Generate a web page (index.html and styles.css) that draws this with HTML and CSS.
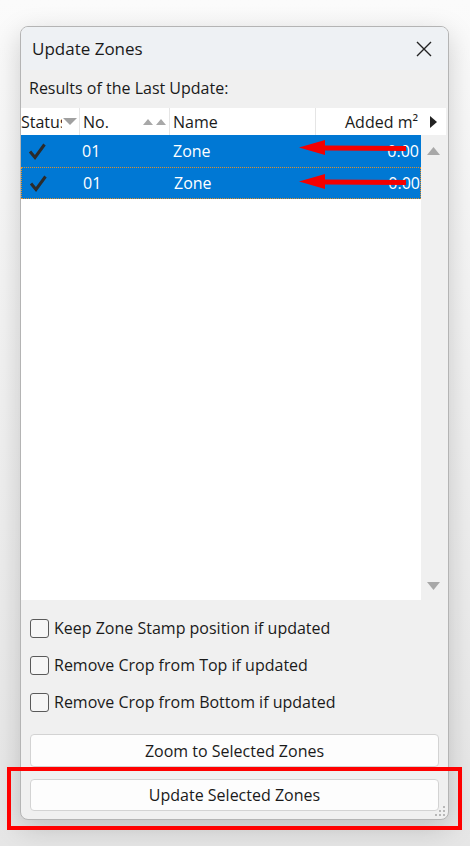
FILE: index.html
```html
<!DOCTYPE html>
<html lang="en">
<head>
    <meta charset="UTF-8">
    <meta name="viewport" content="width=device-width, initial-scale=1.0">
    <title>Update Zones</title>
    <link rel="stylesheet" href="styles.css">
</head>
<body>
    <div class="dialog">
        <div class="titlebar">
            <span class="title">Update Zones</span>
            <svg class="close" width="16" height="16" viewBox="0 0 16 16">
                <path d="M1 1 L15 15 M15 1 L1 15" stroke="#222" stroke-width="1.4" fill="none"/>
            </svg>
        </div>

        <div class="content">
            <p class="label">Results of the Last Update:</p>

            <div class="table">
                <div class="header">
                    <div class="hcell status">
                        <span>Status</span>
                        <svg class="sort" width="14" height="8" viewBox="0 0 14 8"><path d="M0 0 H14 L7 7 Z" fill="#a0a0a0"/></svg>
                    </div>
                    <div class="hcell no">
                        <span>No.</span>
                        <svg class="sort2" width="23" height="7" viewBox="0 0 23 7"><path d="M0 7 L5 1 L10 7 Z M13 7 L18 1 L23 7 Z" fill="#a8a8a8"/></svg>
                    </div>
                    <div class="hcell name">Name</div>
                    <div class="hcell added">Added m²</div>
                    <div class="hcell more">
                        <svg width="7" height="12" viewBox="0 0 7 12"><path d="M0 0 L7 6 L0 12 Z" fill="#222"/></svg>
                    </div>
                </div>

                <div class="body">
                    <div class="rows">
                        <div class="row">
                            <div class="cell status"><svg width="18" height="17" viewBox="0 0 18 17"><path d="M2 8.5 L7 14.5 L16.5 1.5" stroke="#2b2b2b" stroke-width="3" fill="none"/></svg></div>
                            <div class="cell no">01</div>
                            <div class="cell name">Zone</div>
                            <div class="cell added">0.00</div>
                        </div>
                        <div class="row focused">
                            <div class="cell status"><svg width="18" height="17" viewBox="0 0 18 17"><path d="M2 8.5 L7 14.5 L16.5 1.5" stroke="#2b2b2b" stroke-width="3" fill="none"/></svg></div>
                            <div class="cell no">01</div>
                            <div class="cell name">Zone</div>
                            <div class="cell added">0.00</div>
                        </div>
                    </div>
                    <div class="scrollbar">
                        <svg width="13" height="8" viewBox="0 0 13 8"><path d="M0 8 L6.5 0 L13 8 Z" fill="#a8a8a8"/></svg>
                        <svg width="13" height="8" viewBox="0 0 13 8"><path d="M0 0 H13 L6.5 8 Z" fill="#a8a8a8"/></svg>
                    </div>
                </div>

                <svg class="arrow arrow1" width="110" height="18" viewBox="0 0 110 18"><path d="M107 6 L26 5.5 L26 0 L0 7.5 L26 15 L26 10.5 L107 11 Z" fill="#f40000"/></svg>
                <svg class="arrow arrow2" width="110" height="18" viewBox="0 0 110 18"><path d="M107 6 L26 5.5 L26 0 L0 7.5 L26 15 L26 10.5 L107 11 Z" fill="#f40000"/></svg>
            </div>

            <div class="options">
                <label class="option"><span class="box"></span>Keep Zone Stamp position if updated</label>
                <label class="option"><span class="box"></span>Remove Crop from Top if updated</label>
                <label class="option"><span class="box"></span>Remove Crop from Bottom if updated</label>
            </div>

            <div class="buttons">
                <button class="btn zoom">Zoom to Selected Zones</button>
                <button class="btn update">Update Selected Zones</button>
            </div>
        </div>

        <svg class="grip" width="12" height="12" viewBox="0 0 12 12">
            <rect x="9" y="1" width="2" height="2" fill="#b8b8b8"/>
            <rect x="5" y="5" width="2" height="2" fill="#b8b8b8"/>
            <rect x="9" y="5" width="2" height="2" fill="#b8b8b8"/>
            <rect x="1" y="9" width="2" height="2" fill="#b8b8b8"/>
            <rect x="5" y="9" width="2" height="2" fill="#b8b8b8"/>
            <rect x="9" y="9" width="2" height="2" fill="#b8b8b8"/>
        </svg>
    </div>

    <div class="highlight"></div>
</body>
</html>
```

FILE: styles.css
```css
body {
    font-family: "Open Sans", "Noto Sans", Arial, sans-serif;
    margin: 0;
    padding: 0;
    background: linear-gradient(#fbfbfb, #e6e6e6);
    height: 846px;
    position: relative;
    overflow: hidden;
    color: #1a1a1a;
}

.dialog {
    position: relative;
    margin: 26px 0 0 20px;
    width: 427px;
    height: 792px;
    border: 1px solid #b4b4b4;
    border-radius: 8px;
    background-color: #f0f0f0;
    box-shadow: 0 8px 28px rgba(0, 0, 0, 0.18);
    display: flex;
    flex-direction: column;
    overflow: hidden;
}

.titlebar {
    height: 43px;
    background-color: #eef1f4;
    display: flex;
    align-items: center;
    justify-content: space-between;
    padding: 0 16px 0 11px;
    flex-shrink: 0;
}

.title {
    font-size: 17px;
    color: #1a1a1a;
}

.content {
    flex: 1;
    display: flex;
    flex-direction: column;
}

.label {
    margin: 0;
    padding: 7px 0 0 8px;
    height: 38px;
    font-size: 16px;
    box-sizing: border-box;
}

.table {
    position: relative;
    width: 425px;
    display: flex;
    flex-direction: column;
}

.header {
    height: 27px;
    background-color: #fff;
    display: grid;
    grid-template-columns: 59px 90px 146px 105px 25px;
    font-size: 16px;
}

.hcell {
    display: flex;
    align-items: center;
    border-right: 1px solid #e5e5e5;
    overflow: hidden;
    white-space: nowrap;
}

.hcell.status span {
    flex-shrink: 0;
}

.hcell.status .sort {
    margin-left: -6px;
    padding: 4px 2px 4px 1px;
    background-color: #fff;
    flex-shrink: 0;
}

.hcell.no {
    padding-left: 3px;
    justify-content: space-between;
}

.hcell.no .sort2 {
    margin-right: 3px;
}

.hcell.name {
    padding-left: 3px;
}

.hcell.added {
    justify-content: flex-end;
    padding-right: 3px;
    border-right: none;
}

.hcell.more {
    justify-content: center;
    border-right: none;
}

.body {
    height: 465px;
    display: flex;
}

.rows {
    width: 400px;
    background-color: #fff;
}

.row {
    height: 32px;
    background-color: #0078d4;
    color: #fff;
    display: grid;
    grid-template-columns: 59px 90px 146px 105px;
    font-size: 16px;
    box-sizing: border-box;
}

.row.focused {
    border: 1px dotted #e0902a;
}

.cell {
    display: flex;
    align-items: center;
    white-space: nowrap;
}

.cell.status {
    padding-left: 7px;
}

.cell.no {
    padding-left: 2px;
}

.cell.name {
    padding-left: 3px;
}

.cell.added {
    justify-content: flex-end;
    overflow: hidden;
    width: 103px;
}

.scrollbar {
    width: 25px;
    background-color: #f0f0f0;
    display: flex;
    flex-direction: column;
    justify-content: space-between;
    align-items: center;
    padding: 12px 0 10px;
    box-sizing: border-box;
}

.arrow {
    position: absolute;
    left: 278px;
}

.arrow1 {
    top: 32px;
}

.arrow2 {
    top: 66px;
}

.options {
    padding: 19px 0 0 9px;
    display: flex;
    flex-direction: column;
    gap: 19px;
}

.option {
    display: flex;
    align-items: center;
    gap: 5px;
    font-size: 16px;
    height: 18px;
}

.box {
    width: 17px;
    height: 17px;
    border: 1px solid #5a5a5a;
    border-radius: 3px;
    background-color: #f6f6f6;
}

.buttons {
    margin-top: 23px;
    padding: 0 9px;
    display: flex;
    flex-direction: column;
    gap: 12px;
}

.btn {
    height: 33px;
    font-family: inherit;
    font-size: 16px;
    color: #1a1a1a;
    background-color: #fdfdfd;
    border: 1px solid #d3d3d3;
    border-radius: 4px;
    padding: 0;
}

.btn.update {
    height: 32px;
}

.grip {
    position: absolute;
    right: 2px;
    bottom: 2px;
}

.highlight {
    position: absolute;
    left: 7px;
    top: 767px;
    width: 447px;
    height: 55px;
    border: 4px solid #ff0000;
}
```
